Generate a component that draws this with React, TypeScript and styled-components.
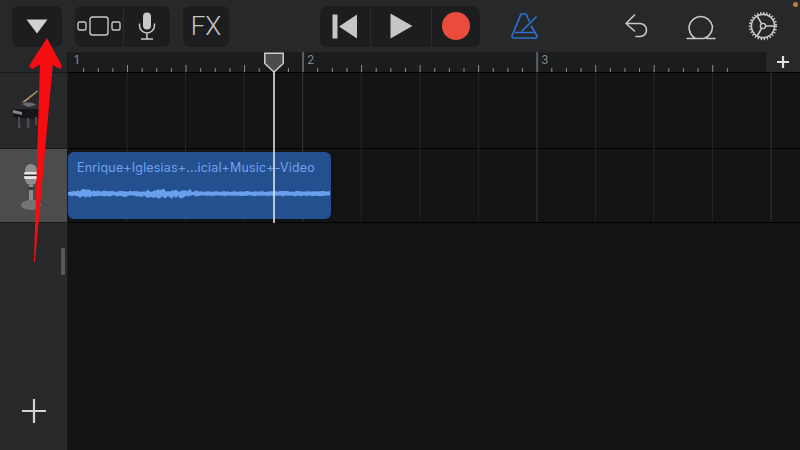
import React from "react";
import styled, { createGlobalStyle } from "styled-components";

const Global = createGlobalStyle`
  html, body { margin: 0; padding: 0; background: #121314; }
  #root { width: 800px; height: 450px; overflow: hidden; }
`;
const Page = styled.div`
  position: relative; width: 800px; height: 450px; overflow: hidden;
  display: flex; flex-direction: column; background: #121314;
  font-family: Inter, "Liberation Sans", sans-serif;
`;
const Toolbar = styled.header`
  height: 52px; flex: none; display: flex; align-items: center;
  padding: 0 0 0 12px; box-sizing: border-box; background: #27282a;
`;
const Group = styled.div<{ $w: number; $ml?: number }>`
  width: ${p => p.$w}px; height: 41px; margin-left: ${p => p.$ml ?? 0}px; flex: none;
  display: flex; background: #1c1d1f; border-radius: 7px; overflow: hidden;
`;
const Cell = styled.div<{ $w?: number; $rule?: boolean }>`
  flex: ${p => (p.$w ? `0 0 ${p.$w}px` : "1")}; display: flex; align-items: center; justify-content: center;
  box-sizing: border-box; border-left: ${p => (p.$rule ? "1px solid #2a2b2d" : "none")};
`;
const FxText = styled.span`
  font-size: 26px; font-weight: 300; color: #c4c4c4; font-family: Roboto, sans-serif;
`;
const ToolIcon = styled.div<{ $w: number; $ml: number }>`
  width: ${p => p.$w}px; margin-left: ${p => p.$ml}px; height: 41px; flex: none;
  display: flex; align-items: center; justify-content: center;
`;
const Dot = styled.i`
  position: absolute; left: 793px; top: 2px; width: 5px; height: 5px; border-radius: 50%; background: #b9803f;
`;
const Body = styled.div`flex: 1; display: flex; min-height: 0;`;
const Sidebar = styled.aside`
  position: relative; width: 68px; flex: none; background: #27282a; display: flex; flex-direction: column;
  border-right: 1px solid #1a1b1c; box-sizing: border-box;
`;
const TrackHead = styled.div<{ $h: number; $active?: boolean }>`
  height: ${p => p.$h}px; flex: none; box-sizing: border-box; display: flex; align-items: center; justify-content: center;
  background: ${p => (p.$active ? "#4b4c4b" : "transparent")};
  border-top: 1px solid #18191a;
`;
const HeadSpacer = styled.div`height: 20px; flex: none;`;
const AddArea = styled.div`
  flex: 1; position: relative; display: flex; align-items: flex-end; justify-content: center; padding-bottom: 27px;
  border-top: 1px solid #18191a;
`;
const ScrollThumb = styled.i`
  position: absolute; left: 61px; top: 25px; width: 4px; height: 27px; border-radius: 1px; background: #57585a;
`;
const Main = styled.main`flex: 1; display: flex; flex-direction: column; min-width: 0; position: relative;`;
const RulerRow = styled.div`height: 20px; flex: none; display: flex;`;
const Ruler = styled.div`flex: 1; position: relative; background: #1b1c1e; overflow: hidden;`;
const RulerTicks = styled.svg`position: absolute; left: 0; top: 0;`;
const Corner = styled.div`
  width: 34px; flex: none; background: #27282a; display: flex; align-items: center; justify-content: center;
`;
const BarNum = styled.span<{ $x: number }>`
  position: absolute; left: ${p => p.$x}px; top: 0px; font-size: 12px; line-height: 15px; color: #858687;
`;
const Lane = styled.div<{ $h?: number }>`
  height: ${p => (p.$h ? `${p.$h}px` : "auto")}; flex: ${p => (p.$h ? "none" : "1")};
  border-top: 1px solid #000; box-sizing: border-box; position: relative;
`;
const GridLines = styled.svg`position: absolute; left: 0; top: 20px;`;
const Clip = styled.div`
  position: absolute; left: 0; top: 100px; width: 263px; height: 67px; box-sizing: border-box;
  background: #25508f; border-radius: 6px; overflow: hidden;
`;
const ClipTitle = styled.div`
  padding: 8px 0 0 9px; font-size: 12.5px; line-height: 15px; letter-spacing: 0.17px; color: #6ea2ee; white-space: nowrap;
`;
const Wave = styled.svg`position: absolute; left: 0; top: 31px;`;
const Playhead = styled.svg`position: absolute; left: 196px; top: 0; z-index: 3;`;
const Arrow = styled.svg`position: absolute; left: 0; top: 0; z-index: 5; pointer-events: none;`;

const W = 698;
const rng = (i: number) => {
  const v = Math.sin(i * 12.9898) * 43758.5453;
  return v - Math.floor(v);
};
const wavePath = () => {
  const up: string[] = [];
  const down: string[] = [];
  for (let x = 0; x <= 263; x += 2) {
    const loud = (x > 10 && x < 30) || (x > 72 && x < 125);
    const env = loud ? 3.4 : x < 130 ? 1.8 : x < 200 ? 0.9 : 1.1;
    const a = 1 + rng(x) * env;
    const b = 1.2 + rng(x + 999) * env;
    up.push(`${x},${(10 - a).toFixed(1)}`);
    down.unshift(`${x},${(11 + b).toFixed(1)}`);
  }
  return `M${up.join(" L")} L${down.join(" L")} Z`;
};
const ticks = () => {
  const out: React.ReactNode[] = [];
  for (let i = 1; i < 48; i++) {
    const x = 1 + i * 14.63;
    if (x > W - 34) break;
    const kind = i % 16 === 0 ? 2 : i % 4 === 0 ? 1 : 0;
    out.push(
      <line key={i} x1={x} x2={x} y1={kind === 2 ? 0 : kind === 1 ? 13 : 16} y2={20}
        stroke={kind === 2 ? "#5e5f61" : "#8b8c8d"} strokeWidth={kind === 2 ? 2 : 1} />
    );
  }
  return out;
};
const grid = () => {
  const out: React.ReactNode[] = [];
  for (let i = 1; i < 13; i++) {
    const x = 0.5 + i * 58.55;
    out.push(<line key={i} x1={x} x2={x} y1={0} y2={150} stroke={i % 4 === 0 ? "#353637" : "#232425"} strokeWidth={1} />);
  }
  return out;
};

const Icon = { stroke: "#c8c8c8", fill: "none" };

export default function App() {
  return (
    <Page>
      <Global />
      <Toolbar>
        <Group $w={50}>
          <Cell>
            <svg width="22" height="15" viewBox="0 0 22 15"><path d="M0.5 0.5H21.5L11 14.5Z" fill="#d2d2d2" /></svg>
          </Cell>
        </Group>
        <Group $w={95} $ml={13}>
          <Cell $w={48}>
            <svg width="44" height="20" viewBox="0 0 44 20" {...Icon} strokeWidth="1.4">
              <rect x="1" y="6" width="8" height="8" rx="1.5" />
              <rect x="13" y="1" width="18" height="18" rx="2.5" />
              <rect x="35" y="6" width="8" height="8" rx="1.5" />
            </svg>
          </Cell>
          <Cell $rule>
            <svg width="20" height="28" viewBox="0 0 20 28" {...Icon} strokeWidth="1.5">
              <rect x="6" y="0.5" width="8" height="17" rx="4" fill="#c8c8c8" stroke="none" />
              <path d="M2.5 11.5v2a7.5 7.5 0 0 0 15 0v-2M10 21v6M4 27h12" />
            </svg>
          </Cell>
        </Group>
        <Group $w={46} $ml={13}>
          <Cell><FxText>FX</FxText></Cell>
        </Group>
        <Group $w={160} $ml={91}>
          <Cell $w={50}>
            <svg width="26" height="25" viewBox="0 0 26 25" fill="#c6c6c6">
              <rect x="0.5" y="0.5" width="5" height="24" rx="0.6" />
              <path d="M25 0.5V24.5L7 12.5Z" />
            </svg>
          </Cell>
          <Cell $w={61} $rule>
            <svg width="23" height="26" viewBox="0 0 23 26"><path d="M0.5 0.5L22.5 13L0.5 25.5Z" fill="#c6c6c6" /></svg>
          </Cell>
          <Cell $rule>
            <svg width="28" height="28" viewBox="0 0 28 28"><circle cx="14" cy="14" r="14" fill="#e94b3c" /></svg>
          </Cell>
        </Group>
        <ToolIcon $w={28} $ml={30}>
          <svg width="27" height="26" viewBox="0 0 27 26" fill="none" stroke="#2f6fd0" strokeWidth="1.7" strokeLinejoin="round" strokeLinecap="round">
            <path d="M10 1h5l3.2 7M20.5 13.5L26 23a1.5 1.5 0 0 1-1.4 2H2.4A1.5 1.5 0 0 1 1 23L10 1" />
            <path d="M4.5 19.5h18M11 18L25 4" />
          </svg>
        </ToolIcon>
        <ToolIcon $w={26} $ml={86}>
          <svg width="26" height="24" viewBox="0 0 26 24" {...Icon} strokeWidth="1.6" strokeLinecap="round" strokeLinejoin="round">
            <path d="M10.5 1L2 9.5L10.5 17M2.5 9.5H16a6.5 6.5 0 0 1 0 13h-4" />
          </svg>
        </ToolIcon>
        <ToolIcon $w={30} $ml={36}>
          <svg width="30" height="27" viewBox="0 0 30 27" {...Icon} strokeWidth="1.6" strokeLinecap="round">
            <path d="M1 25.5H18C23 24 26.5 19 26.5 13.5A12 12.5 0 0 0 3 13.5C3 18 5 23 9.5 25.5M21 25.5H29" />
          </svg>
        </ToolIcon>
        <ToolIcon $w={30} $ml={32}>
          <svg width="30" height="30" viewBox="0 0 30 30" {...Icon} strokeLinecap="round">
            <circle cx="15" cy="15" r="11.6" strokeWidth="1.6" />
            <circle cx="15" cy="15" r="13" strokeWidth="2.4" strokeDasharray="1.3 1.75" strokeLinecap="butt" />
            <circle cx="15" cy="15" r="2.6" strokeWidth="1.4" />
            <path d="M17.6 15H26.5M13.7 12.8L9.2 5M13.7 17.2L9.2 25" strokeWidth="1.6" />
          </svg>
        </ToolIcon>
      </Toolbar>
      <Dot />
      <Body>
        <Sidebar>
          <HeadSpacer />
          <TrackHead $h={76}>
            <svg width="50" height="48" viewBox="0 0 50 48">
              <path d="M13 15L28 3.5l1 1L15 16Z" fill="#a98e63" />
              <path d="M11 17C14 14 25 14 30 18V24H4l3-5Z" fill="#2c2d30" />
              <path d="M13 17c4-2 10-2 14 1l-8 2Z" fill="#6a6c70" />
              <path d="M4 22h26v9l-8 1H8l-4-4Z" fill="#141517" />
              <path d="M4 23l9 2v3l-9-2Z" fill="#85878c" />
              <path d="M9 30h2.4v11H9ZM18 31h2.4v10H18ZM26 30h2v8h-2Z" fill="#4a4c50" />
              <path d="M11 31h7v6h-7Z" fill="#26272a" />
            </svg>
          </TrackHead>
          <TrackHead $h={74} $active>
            <svg width="36" height="54" viewBox="0 0 36 54">
              <rect x="9" y="5" width="12" height="21" rx="6" fill="#8b8d90" />
              <rect x="8" y="13" width="14" height="7" rx="1.5" fill="#e6e6e6" />
              <rect x="8" y="15.5" width="13" height="1.6" fill="#2e2e2e" />
              <rect x="13" y="26" width="4" height="16" fill="#8a8c8e" />
              <rect x="12" y="28" width="6" height="3" fill="#3b3c3d" />
              <ellipse cx="15" cy="46" rx="10" ry="5" fill="#737475" />
            </svg>
          </TrackHead>
          <AddArea>
            <ScrollThumb />
            <svg width="24" height="24" viewBox="0 0 24 24"><path d="M0 12H24M12 0V24" stroke="#d4d4d4" strokeWidth="2.2" /></svg>
          </AddArea>
        </Sidebar>
        <Main>
          <RulerRow>
            <Ruler>
              <RulerTicks width={W} height={20}>{ticks()}</RulerTicks>
              <BarNum $x={6}>1</BarNum>
              <BarNum $x={239}>2</BarNum>
              <BarNum $x={473}>3</BarNum>
            </Ruler>
            <Corner>
              <svg width="12" height="12" viewBox="0 0 12 12"><path d="M0 6H12M6 0V12" stroke="#e2e2e2" strokeWidth="2.2" /></svg>
            </Corner>
          </RulerRow>
          <Lane $h={76} />
          <Lane $h={74} />
          <Lane />
          <GridLines width={732} height={150}>{grid()}</GridLines>
          <Clip>
            <ClipTitle>Enrique+Iglesias+...icial+Music+-Video</ClipTitle>
            <Wave width={263} height={22}><path d={wavePath()} fill="#69a0ee" /></Wave>
          </Clip>
          <Playhead width={20} height={171} viewBox="0 0 20 171">
            <path d="M10 19V171" stroke="#e4e4e4" strokeWidth="1.6" />
            <path d="M0.8 1.2H19.2V11.5L10 20L0.8 11.5Z" fill="#4a4b4d" stroke="#cfcfcf" strokeWidth="1.5" />
          </Playhead>
        </Main>
      </Body>
      <Arrow width={80} height={270} viewBox="0 0 80 270">
        <path d="M47 38L62 66L60 69L51 64L41 64L32 69L29 66Z" fill="#f50d12" />
        <path d="M40 62H53L35 262H34Z" fill="#f50d12" />
      </Arrow>
    </Page>
  );
}
